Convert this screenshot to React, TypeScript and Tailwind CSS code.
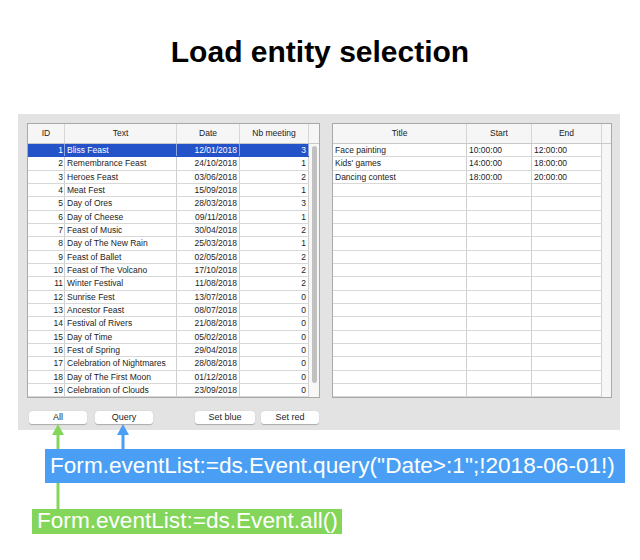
import React from "react";

const events: [number, string, string, number][] = [
  [1, "Bliss Feast", "12/01/2018", 3],
  [2, "Remembrance Feast", "24/10/2018", 1],
  [3, "Heroes Feast", "03/06/2018", 2],
  [4, "Meat Fest", "15/09/2018", 1],
  [5, "Day of Ores", "28/03/2018", 3],
  [6, "Day of Cheese", "09/11/2018", 1],
  [7, "Feast of Music", "30/04/2018", 2],
  [8, "Day of The New Rain", "25/03/2018", 1],
  [9, "Feast of Ballet", "02/05/2018", 2],
  [10, "Feast of The Volcano", "17/10/2018", 2],
  [11, "Winter Festival", "11/08/2018", 2],
  [12, "Sunrise Fest", "13/07/2018", 0],
  [13, "Ancestor Feast", "08/07/2018", 0],
  [14, "Festival of Rivers", "21/08/2018", 0],
  [15, "Day of Time", "05/02/2018", 0],
  [16, "Fest of Spring", "29/04/2018", 0],
  [17, "Celebration of Nightmares", "28/08/2018", 0],
  [18, "Day of The First Moon", "01/12/2018", 0],
  [19, "Celebration of Clouds", "23/09/2018", 0],
];

const meetings: [string, string, string][] = [
  ["Face painting", "10:00:00", "12:00:00"],
  ["Kids' games", "14:00:00", "18:00:00"],
  ["Dancing contest", "18:00:00", "20:00:00"],
];

function LeftTable() {
  return (
    <div className="w-[293px] border border-[#a9a9a9] bg-white">
      <div className="grid h-[20px] grid-cols-[37px_112px_63px_69px_10px] border-b border-[#c9c9c9] bg-[#f6f6f6] text-[#222]">
        <div className="flex items-center justify-center border-r border-[#d6d6d6]">ID</div>
        <div className="flex items-center justify-center border-r border-[#d6d6d6]">Text</div>
        <div className="flex items-center justify-center border-r border-[#d6d6d6]">Date</div>
        <div className="flex items-center justify-center border-r border-[#d6d6d6]">Nb meeting</div>
        <div></div>
      </div>
      <div className="flex">
        <div className="w-[281px]">
          {events.map(([id, text, date, nb]) => {
            const sel = id === 1;
            return (
              <div
                key={id}
                className={
                  sel
                    ? "grid h-[13.33px] grid-cols-[37px_112px_63px_69px] border-b border-[#2352c9] bg-[#2352c9] leading-[12.33px] text-white"
                    : "grid h-[13.33px] grid-cols-[37px_112px_63px_69px] border-b border-[#d8d8d8] leading-[12.33px] text-[#1c1c1c]"
                }
              >
                <div className={sel ? "border-r border-[#8ea6e4] pr-[1px] text-right" : "border-r border-[#cfcfcf] pr-[1px] text-right"}>{id}</div>
                <div className={sel ? "border-r border-[#8ea6e4] pl-[2px] whitespace-nowrap" : "border-r border-[#cfcfcf] pl-[2px] whitespace-nowrap"}>{text}</div>
                <div className={sel ? "border-r border-[#8ea6e4] pr-[2px] text-right" : "border-r border-[#cfcfcf] pr-[2px] text-right"}>{date}</div>
                <div className={sel ? "border-r border-[#8ea6e4] pr-[2px] text-right" : "border-r border-[#cfcfcf] pr-[2px] text-right"}>{nb}</div>
              </div>
            );
          })}
        </div>
        <div className="flex w-[10px] justify-center bg-[#f7f7f7] pt-[2px]">
          <div className="h-[237px] w-[5px] rounded-full bg-[#c1c1c1]"></div>
        </div>
      </div>
    </div>
  );
}

function RightTable() {
  const rows = Array.from({ length: 19 }, (_, i) => meetings[i] ?? ["", "", ""]);
  return (
    <div className="w-[280px] border border-[#a9a9a9] bg-white">
      <div className="grid h-[20px] grid-cols-[134px_65px_70px_9px] border-b border-[#c9c9c9] bg-[#f6f6f6] text-[#222]">
        <div className="flex items-center justify-center border-r border-[#d6d6d6]">Title</div>
        <div className="flex items-center justify-center border-r border-[#d6d6d6]">Start</div>
        <div className="flex items-center justify-center border-r border-[#d6d6d6]">End</div>
        <div></div>
      </div>
      <div className="flex">
        <div className="w-[269px]">
          {rows.map((r, i) => (
            <div
              key={i}
              className="grid h-[13.33px] grid-cols-[134px_65px_70px] border-b border-[#d8d8d8] leading-[12.33px] text-[#1c1c1c]"
            >
              <div className="border-r border-[#cfcfcf] pl-[2px] whitespace-nowrap">{r[0]}</div>
              <div className="border-r border-[#cfcfcf] pl-[2px]">{r[1]}</div>
              <div className="border-r border-[#cfcfcf] pl-[2px]">{r[2]}</div>
            </div>
          ))}
        </div>
        <div className="w-[9px] bg-[#f7f7f7]"></div>
      </div>
    </div>
  );
}

function Btn({ label, w, cls }: { label: string; w: string; cls: string }) {
  return (
    <div
      className={`flex h-[13px] items-center justify-center rounded-[3px] bg-white text-[9px] text-[#1c1c1c] shadow-[0_0.5px_1px_rgba(0,0,0,0.25)] ${w} ${cls}`}
    >
      {label}
    </div>
  );
}

export default function App() {
  return (
    <div
      className="relative h-[560px] w-[640px] overflow-hidden bg-white"
      style={{ fontFamily: '"Liberation Sans", Arial, sans-serif' }}
    >
      <h1 className="mt-[34px] text-center text-[30px] font-bold leading-[36px] text-black">
        Load entity selection
      </h1>
      <div className="ml-[18px] mt-[44px] h-[316px] w-[602px] bg-[#e3e3e3] pl-[9px] pt-[9px] text-[8.5px]">
        <div className="flex gap-[12px]">
          <LeftTable />
          <RightTable />
        </div>
        <div className="mt-[13px] flex">
          <Btn label="All" w="w-[58px]" cls="ml-[2px]" />
          <Btn label="Query" w="w-[58px]" cls="ml-[8px]" />
          <Btn label="Set blue" w="w-[60px]" cls="ml-[42px]" />
          <Btn label="Set red" w="w-[58px]" cls="ml-[6px]" />
        </div>
      </div>

      <svg className="absolute left-0 top-0" width="640" height="560">
        <line x1="58" y1="432" x2="58" y2="512" stroke="#84d65a" strokeWidth="3" />
        <polygon points="58,424 52,435 64,435" fill="#84d65a" />
        <line x1="123" y1="432" x2="123" y2="452" stroke="#4a9ff5" strokeWidth="3" />
        <polygon points="123,424 117,435 129,435" fill="#4a9ff5" />
      </svg>

      <div className="relative ml-[45px] mt-[19px] flex h-[34px] w-[580px] items-center bg-[#4a9ff5] pl-[5px] text-[22.6px] leading-none text-white">
        Form.eventList:=ds.Event.query("Date&gt;:1";!2018-06-01!)
      </div>
      <div className="relative ml-[32px] mt-[26px] flex h-[25px] w-[310px] items-center bg-[#84d65a] pl-[5px] text-[22.6px] leading-none text-white">
        Form.eventList:=ds.Event.all()
      </div>
    </div>
  );
}
